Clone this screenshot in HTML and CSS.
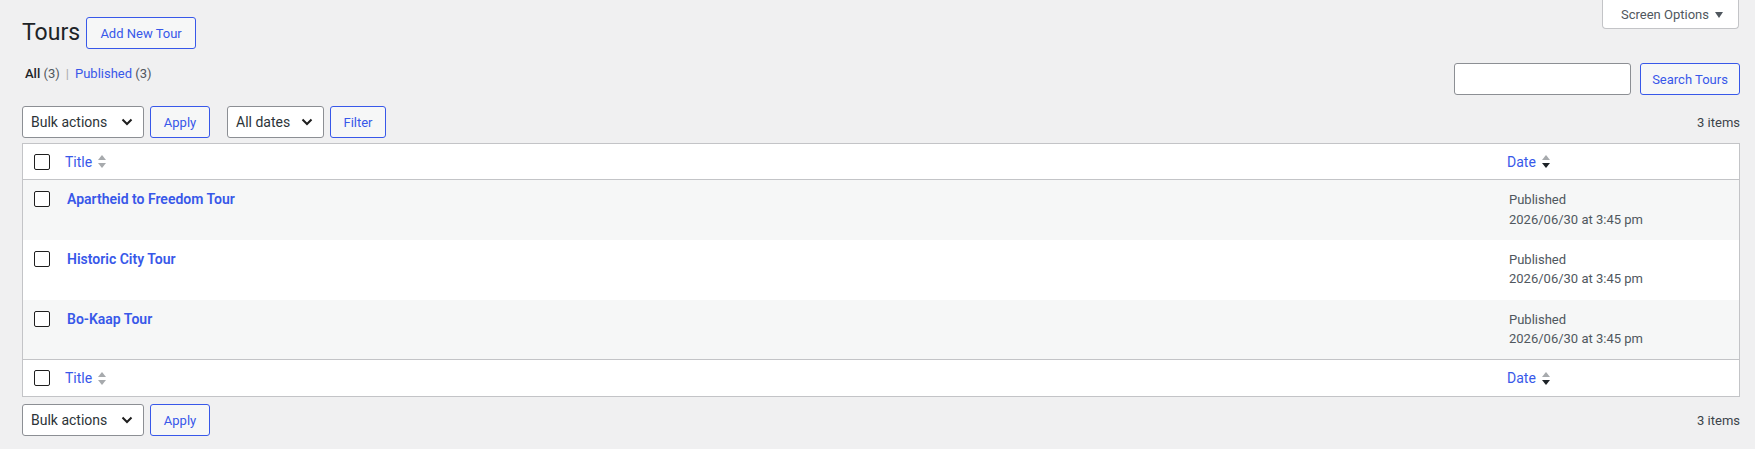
FILE: index.html
```html
<!DOCTYPE html>
<html lang="en">
<head>
<meta charset="utf-8">
<title>Tours</title>
<link rel="stylesheet" href="styles.css">
</head>
<body>
<div class="wrap">
  <div class="head-row">
    <div class="title-group">
      <h1 class="page-title">Tours</h1>
      <a class="btn title-action" href="#">Add New Tour</a>
    </div>
    <div class="screen-options">Screen Options <span class="tri"></span></div>
  </div>

  <div class="filter-row">
    <ul class="subsubsub">
      <li class="current">All <span class="count">(3)</span></li>
      <li class="sep">|</li>
      <li><a href="#">Published</a> <span class="count">(3)</span></li>
    </ul>
    <div class="search-box">
      <input class="search-input" type="text" aria-label="Search">
      <a class="btn" href="#">Search Tours</a>
    </div>
  </div>

  <div class="tablenav top">
    <div class="actions">
      <div class="select bulk">Bulk actions<svg class="chev" viewBox="0 0 12 8" width="12" height="8"><polyline points="1.5,1.5 6,6 10.5,1.5" fill="none" stroke="#1e1e1e" stroke-width="2"/></svg></div>
      <a class="btn small" href="#">Apply</a>
      <div class="select dates">All dates<svg class="chev" viewBox="0 0 12 8" width="12" height="8"><polyline points="1.5,1.5 6,6 10.5,1.5" fill="none" stroke="#1e1e1e" stroke-width="2"/></svg></div>
      <a class="btn small filter" href="#">Filter</a>
    </div>
    <div class="num-items">3 items</div>
  </div>

  <table class="list">
    <thead>
      <tr>
        <td class="check"><span class="cb"></span></td>
        <th class="col-title"><a href="#">Title</a><svg class="sort" viewBox="0 0 10 16" width="10" height="16"><polygon points="1,6 5,1 9,6" fill="#a7aaad"/><polygon points="1,9 9,9 5,14" fill="#a7aaad"/></svg></th>
        <th class="col-date"><a href="#">Date</a><svg class="sort" viewBox="0 0 10 16" width="10" height="16"><polygon points="1,6 5,1 9,6" fill="#a7aaad"/><polygon points="1,9 9,9 5,14" fill="#1d2327"/></svg></th>
      </tr>
    </thead>
    <tbody>
      <tr class="alt">
        <td class="check"><span class="cb"></span></td>
        <td class="col-title"><a class="row-title" href="#">Apartheid to Freedom Tour</a></td>
        <td class="col-date">Published<br>2026/06/30 at 3:45 pm</td>
      </tr>
      <tr>
        <td class="check"><span class="cb"></span></td>
        <td class="col-title"><a class="row-title" href="#">Historic City Tour</a></td>
        <td class="col-date">Published<br>2026/06/30 at 3:45 pm</td>
      </tr>
      <tr class="alt">
        <td class="check"><span class="cb"></span></td>
        <td class="col-title"><a class="row-title" href="#">Bo-Kaap Tour</a></td>
        <td class="col-date">Published<br>2026/06/30 at 3:45 pm</td>
      </tr>
    </tbody>
    <tfoot>
      <tr>
        <td class="check"><span class="cb"></span></td>
        <th class="col-title"><a href="#">Title</a><svg class="sort" viewBox="0 0 10 16" width="10" height="16"><polygon points="1,6 5,1 9,6" fill="#a7aaad"/><polygon points="1,9 9,9 5,14" fill="#a7aaad"/></svg></th>
        <th class="col-date"><a href="#">Date</a><svg class="sort" viewBox="0 0 10 16" width="10" height="16"><polygon points="1,6 5,1 9,6" fill="#a7aaad"/><polygon points="1,9 9,9 5,14" fill="#1d2327"/></svg></th>
      </tr>
    </tfoot>
  </table>

  <div class="tablenav bottom">
    <div class="actions">
      <div class="select bulk">Bulk actions<svg class="chev" viewBox="0 0 12 8" width="12" height="8"><polyline points="1.5,1.5 6,6 10.5,1.5" fill="none" stroke="#1e1e1e" stroke-width="2"/></svg></div>
      <a class="btn small" href="#">Apply</a>
    </div>
    <div class="num-items">3 items</div>
  </div>
</div>
</body>
</html>
```

FILE: styles.css
```css
html, body {
  margin: 0;
  padding: 0;
  background: #f0f0f1;
}
body {
  font-family: Roboto, "Segoe UI", "Noto Sans", sans-serif;
  font-size: 13px;
  color: #3c434a;
  height: 449px;
  overflow: hidden;
}
a {
  color: #3858e9;
  text-decoration: none;
}
.wrap {
  margin: 0 15px 0 22px;
}

/* header */
.head-row {
  display: flex;
  justify-content: space-between;
  align-items: flex-start;
}
.title-group {
  display: flex;
  align-items: center;
  padding-top: 17px;
  height: 32px;
}
.page-title {
  margin: 0 6px 0 0;
  font-size: 23px;
  font-weight: 400;
  line-height: 32px;
  color: #1d2327;
}
.btn {
  display: inline-flex;
  align-items: center;
  box-sizing: border-box;
  height: 32px;
  padding: 0 11px;
  border: 1px solid #3858e9;
  border-radius: 3px;
  background: #f6f7f7;
  color: #3858e9;
  font-size: 13px;
  font-weight: 400;
  white-space: nowrap;
}
.title-action {
  width: 110px;
  justify-content: center;
}
.screen-options {
  box-sizing: border-box;
  width: 137px;
  height: 29px;
  margin-right: 1px;
  display: flex;
  align-items: center;
  justify-content: center;
  gap: 6px;
  background: #fff;
  border: 1px solid #c3c4c7;
  border-top: none;
  border-radius: 0 0 4px 4px;
  color: #50575e;
  font-size: 13px;
  padding-left: 3px;
}
.tri {
  width: 0;
  height: 0;
  border-left: 4px solid transparent;
  border-right: 4px solid transparent;
  border-top: 6px solid #50575e;
  margin-top: 1px;
}

/* filter row */
.filter-row {
  display: flex;
  justify-content: space-between;
  align-items: flex-start;
  margin-top: 14px;
}
.subsubsub {
  list-style: none;
  display: flex;
  gap: 5px;
  margin: 1px 0 0 3px;
  padding: 0;
  line-height: 20px;
  font-size: 13px;
  color: #646970;
}
.subsubsub .current {
  color: #1d2327;
  font-weight: 500;
}
.subsubsub .current .count {
  font-weight: 400;
}
.count {
  color: #50575e;
}
.sep {
  color: #a7aaad;
  padding: 0 1px;
}
.search-box {
  display: flex;
  gap: 9px;
}
.search-input {
  box-sizing: border-box;
  width: 177px;
  height: 32px;
  margin: 0;
  border: 1px solid #8c8f94;
  border-radius: 3px;
  background: #fff;
}
.search-box .btn {
  width: 100px;
  justify-content: center;
  padding: 0;
}

/* tablenav */
.tablenav {
  display: flex;
  justify-content: space-between;
  align-items: center;
  height: 32px;
}
.tablenav.top {
  margin-top: 11px;
  margin-bottom: 5px;
}
.tablenav.bottom {
  margin-top: 7px;
}
.actions {
  display: flex;
  gap: 6px;
}
.select {
  box-sizing: border-box;
  height: 32px;
  display: flex;
  align-items: center;
  justify-content: space-between;
  padding: 0 10px 0 8px;
  background: #fff;
  border: 1px solid #8c8f94;
  border-radius: 3px;
  color: #2c3338;
  font-size: 14px;
}
.select.bulk { width: 122px; }
.select.dates { width: 97px; margin-left: 11px; }
.btn.small {
  width: 60px;
  justify-content: center;
  padding: 0;
}
.btn.small.filter { width: 56px; }
.num-items {
  color: #3c434a;
  font-size: 13px;
}

/* table */
.list {
  width: 100%;
  border-collapse: collapse;
  border: 1px solid #c3c4c7;
  background: #fff;
  table-layout: fixed;
}
.list th, .list td {
  text-align: left;
  font-weight: 400;
  vertical-align: top;
  padding: 0;
}
.list thead tr {
  height: 36px;
  border-bottom: 1px solid #c3c4c7;
}
.list tfoot tr {
  height: 37px;
  border-top: 1px solid #c3c4c7;
}
.list thead th, .list tfoot th {
  vertical-align: middle;
  font-size: 14px;
  padding-left: 10px;
}
.list thead th a, .list tfoot th a {
  vertical-align: middle;
}
.sort {
  vertical-align: middle;
  margin-left: 5px;
}
.list .check {
  width: 21px;
  padding: 11px 0 0 11px;
  box-sizing: content-box;
}
.list thead .check, .list tfoot .check {
  padding-top: 10px;
}
.cb {
  display: block;
  box-sizing: border-box;
  width: 16px;
  height: 16px;
  border: 1.5px solid #1e1e1e;
  border-radius: 2px;
  background: #fff;
}
.list .col-date {
  width: 232px;
}
.list tbody tr {
  height: 60px;
}
.list tbody tr.alt {
  background: #f6f7f7;
}
.list tbody td.col-title {
  padding: 11px 10px 0 12px;
}
.row-title {
  font-size: 14px;
  font-weight: 600;
}
.list tbody td.col-date {
  padding: 10px 10px 0 12px;
  line-height: 19.5px;
  color: #50575e;
}
```
